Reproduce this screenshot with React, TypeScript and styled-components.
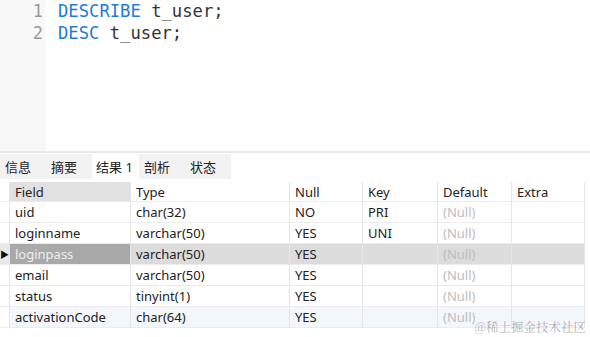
import React from "react";
import styled, { createGlobalStyle } from "styled-components";

const GlobalStyle = createGlobalStyle`
  html, body {
    margin: 0;
    padding: 0;
    background: #ffffff;
    width: 590px;
    height: 337px;
    overflow: hidden;
  }
  body {
    font-family: "Noto Sans", "Noto Sans CJK SC", sans-serif;
    color: #222;
  }
`;

const Page = styled.div`
  position: relative;
  display: flex;
  flex-direction: column;
  width: 590px;
  height: 337px;
  background: #fff;
`;

const Editor = styled.div`
  display: flex;
  height: 151px;
  border-bottom: 2px solid #e9e9e9;
`;

const Gutter = styled.div`
  width: 46px;
  background: #f8f8f8;
  display: flex;
  flex-direction: column;
  align-items: flex-end;
  padding-right: 3px;
  box-sizing: border-box;
`;

const LineNo = styled.div`
  font-family: "DejaVu Sans Mono", monospace;
  font-size: 17px;
  line-height: 22px;
  color: #9a9a9a;
`;

const Code = styled.div`
  flex: 1;
  padding-left: 12px;
  display: flex;
  flex-direction: column;
`;

const CodeLine = styled.div`
  font-family: "DejaVu Sans Mono", monospace;
  font-size: 17.2px;
  line-height: 22px;
  color: #333;
  white-space: pre;
`;

const Kw = styled.span`
  color: #1f7ad8;
`;

const TabBar = styled.div`
  display: flex;
  height: 25px;
  margin-top: 1px;
`;

const Tab = styled.div<{ $active?: boolean }>`
  width: ${(p) => (p.$active ? 47 : 46)}px;
  background: ${(p) => (p.$active ? "#ffffff" : "#f2f2f2")};
  font-size: 13px;
  line-height: 26px;
  padding-left: ${(p) => (p.$active ? 4 : 5)}px;
  box-sizing: border-box;
  color: #222;
`;

const Table = styled.div`
  margin-top: 3px;
  display: grid;
  grid-template-columns: 10px 121px 159px 73px 75px 74px 73px;
  grid-template-rows: 20px;
  grid-auto-rows: 21px;
  width: 585px;
`;

const Cell = styled.div<{ $bg?: string; $color?: string }>`
  line-height: 20px;
  font-size: 13px;
  padding-left: 5px;
  box-sizing: border-box;
  border-right: 1px solid #e6e6e6;
  border-bottom: 1px solid #ececec;
  background: ${(p) => p.$bg ?? "transparent"};
  color: ${(p) => p.$color ?? "#222"};
  white-space: nowrap;
  overflow: hidden;
`;

const Indicator = styled.div<{ $bg?: string }>`
  border-right: 1px solid #e6e6e6;
  border-bottom: 1px solid #ececec;
  box-sizing: border-box;
  background: ${(p) => p.$bg ?? "#fff"};
  display: flex;
  align-items: center;
  justify-content: center;
  font-size: 9px;
  color: #111;
`;

const Watermark = styled.div`
  position: absolute;
  right: 4px;
  bottom: 1px;
  font-family: "Noto Serif CJK SC", "Noto Sans CJK SC", serif;
  font-size: 12.5px;
  color: rgba(150, 150, 150, 0.75);
`;

type Row = {
  field: string;
  type: string;
  nul: string;
  key: string;
  variant?: "selected" | "hover";
};

const rows: Row[] = [
  { field: "uid", type: "char(32)", nul: "NO", key: "PRI" },
  { field: "loginname", type: "varchar(50)", nul: "YES", key: "UNI" },
  { field: "loginpass", type: "varchar(50)", nul: "YES", key: "", variant: "selected" },
  { field: "email", type: "varchar(50)", nul: "YES", key: "" },
  { field: "status", type: "tinyint(1)", nul: "YES", key: "" },
  { field: "activationCode", type: "char(64)", nul: "YES", key: "", variant: "hover" },
];

const headers = ["Field", "Type", "Null", "Key", "Default", "Extra"];

export default function App() {
  return (
    <Page>
      <GlobalStyle />
      <Editor>
        <Gutter>
          <LineNo>1</LineNo>
          <LineNo>2</LineNo>
        </Gutter>
        <Code>
          <CodeLine>
            <Kw>DESCRIBE</Kw> t_user;
          </CodeLine>
          <CodeLine>
            <Kw>DESC</Kw> t_user;
          </CodeLine>
        </Code>
      </Editor>
      <TabBar>
        <Tab>信息</Tab>
        <Tab>摘要</Tab>
        <Tab $active>结果 1</Tab>
        <Tab>剖析</Tab>
        <Tab>状态</Tab>
      </TabBar>
      <Table>
        <Indicator />
        {headers.map((h, i) => (
          <Cell key={h} $bg={i === 0 ? "#e1e1e1" : "#fff"}>
            {h}
          </Cell>
        ))}
        {rows.map((r) => {
          const rowBg =
            r.variant === "selected" ? "#dcdcdc" : r.variant === "hover" ? "#f3f7fc" : "#fff";
          return (
            <React.Fragment key={r.field}>
              <Indicator $bg={r.variant === "selected" ? "#e8e8e8" : "#fff"}>
                {r.variant === "selected" ? "▶" : ""}
              </Indicator>
              <Cell
                $bg={r.variant === "selected" ? "#a9a9a9" : rowBg}
                $color={r.variant === "selected" ? "#eeeeee" : undefined}
              >
                {r.field}
              </Cell>
              <Cell $bg={rowBg}>{r.type}</Cell>
              <Cell $bg={rowBg}>{r.nul}</Cell>
              <Cell $bg={rowBg}>{r.key}</Cell>
              <Cell $bg={rowBg} $color="#bdbdbd">
                (Null)
              </Cell>
              <Cell $bg={rowBg} />
            </React.Fragment>
          );
        })}
      </Table>
      <Watermark>@稀土掘金技术社区</Watermark>
    </Page>
  );
}
